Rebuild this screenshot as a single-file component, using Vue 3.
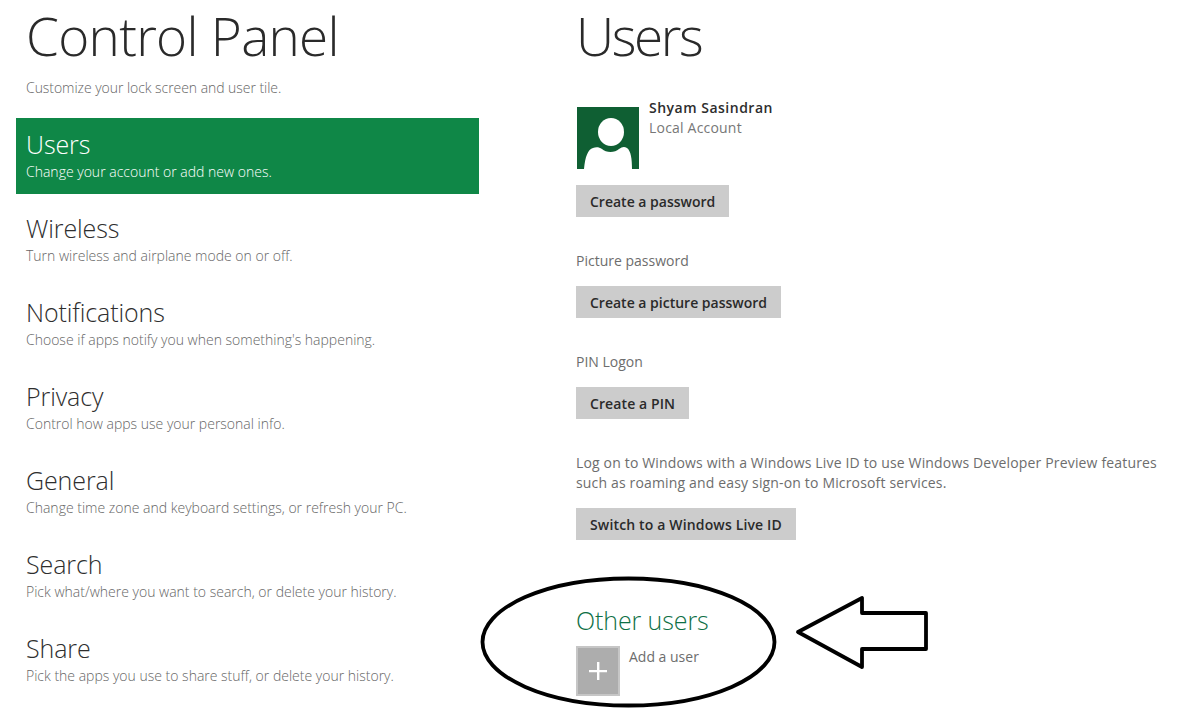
<script setup>
const items = [
  { t: 'Users', s: 'Change your account or add new ones.', active: true },
  { t: 'Wireless', s: 'Turn wireless and airplane mode on or off.' },
  { t: 'Notifications', s: "Choose if apps notify you when something's happening." },
  { t: 'Privacy', s: 'Control how apps use your personal info.' },
  { t: 'General', s: 'Change time zone and keyboard settings, or refresh your PC.' },
  { t: 'Search', s: 'Pick what/where you want to search, or delete your history.' },
  { t: 'Share', s: 'Pick the apps you use to share stuff, or delete your history.' }
]
</script>

<template>
  <div class="page">
    <aside class="left">
      <h1 class="title">Control Panel</h1>
      <p class="intro">Customize your lock screen and user tile.</p>
      <ul class="nav">
        <li v-for="i in items" :key="i.t" class="item" :class="{ active: i.active }">
          <div class="item-t">{{ i.t }}</div>
          <div class="item-s">{{ i.s }}</div>
        </li>
      </ul>
    </aside>
    <main class="right">
      <h1 class="title users">Users</h1>
      <div class="profile">
        <svg class="avatar" width="62" height="62" viewBox="0 0 62 62">
          <rect width="62" height="62" fill="#0f5f33" />
          <ellipse cx="34" cy="25" rx="13" ry="14" fill="#fff" />
          <path d="M7 62C8 50 11 42 16 41C19 40 22 40 25 42C29 46 38 46 42 42C45 40 47 39 50 41C54 44 55 52 55 62Z" fill="#fff" />
        </svg>
        <div class="who">
          <div class="name">Shyam Sasindran</div>
          <div class="acct">Local Account</div>
        </div>
      </div>
      <button class="btn first">Create a password</button>
      <p class="label">Picture password</p>
      <button class="btn">Create a picture password</button>
      <p class="label">PIN Logon</p>
      <button class="btn pin">Create a PIN</button>
      <p class="label para">Log on to Windows with a Windows Live ID to use Windows Developer Preview features<br />such as roaming and easy sign-on to Microsoft services.</p>
      <button class="btn live">Switch to a Windows Live ID</button>
      <h2 class="other">Other users</h2>
      <div class="add">
        <div class="tile">
          <svg width="18" height="18" viewBox="0 0 18 18"><path d="M8 0h2.4v8H18v2.2h-7.6V18H8v-7.8H0V8h8z" fill="#fff" /></svg>
        </div>
        <span class="add-l">Add a user</span>
      </div>
    </main>
    <svg class="mark" width="1189" height="718" viewBox="0 0 1189 718" fill="none" stroke="#000">
      <ellipse cx="628.5" cy="642" rx="146" ry="63.5" stroke-width="3.8" />
      <path d="M798 632L862 598V613H926V649H862V667Z" stroke-width="3.8" stroke-linejoin="round" />
    </svg>
  </div>
</template>

<style>
html, body { margin: 0; background: #fff; }
</style>

<style scoped>
.page {
  position: relative;
  width: 1189px;
  height: 718px;
  overflow: hidden;
  display: flex;
  font-family: "Open Sans", "Noto Sans", sans-serif;
  color: #6d6d6d;
  background: #fff;
}
.left { width: 463px; margin-left: 16px; flex: none; }
.right { margin-left: 97px; flex: 1; display: flex; flex-direction: column; align-items: flex-start; }
.title {
  margin: 0;
  font-size: 53px;
  line-height: 72px;
  font-weight: 300;
  color: #2a2a2a;
  letter-spacing: -0.7px;
}
.title.users { letter-spacing: -2.4px; }
.left .title { padding-left: 10px; }
.intro {
  margin: 6px 0 0;
  padding-left: 10px;
  font-size: 14px;
  line-height: 20px;
  font-weight: 300;
  color: #666;
  letter-spacing: -0.05px;
}
.nav { list-style: none; margin: 20px 0 0; padding: 0; }
.item { height: 76px; margin-bottom: 8px; padding: 11px 10px 0; box-sizing: border-box; }
.item.active { background: #0f8747; }
.item-t {
  font-size: 25px;
  line-height: 30px;
  font-weight: 300;
  color: #2e2e2e;
  letter-spacing: -0.1px;
}
.item-s {
  margin-top: 3px;
  font-size: 14px;
  line-height: 20px;
  font-weight: 300;
  color: #666;
  letter-spacing: 0;
}
.active .item-t, .active .item-s { color: #fff; }
.profile { display: flex; margin-top: 35px; height: 62px; padding-left: 1px; }
.who { margin-left: 10px; margin-top: -9px; }
.name { font-size: 14px; line-height: 20px; font-weight: 600; color: #2d2d2d; letter-spacing: 0.5px; }
.acct { font-size: 14px; line-height: 20px; color: #777; letter-spacing: 0.2px; }
.btn {
  display: block;
  border: 0;
  margin: 0;
  height: 32px;
  padding: 0 14px;
  background: #cccccc;
  font: 600 14px "Open Sans", "Noto Sans", sans-serif;
  color: #2a2a2a;
}
.btn.first { margin-top: 16px; }
.btn.pin { letter-spacing: 0.1px; }
.btn.live { letter-spacing: 0.15px; }
.label { margin: 34px 0 15px; font-size: 14px; line-height: 20px; color: #6d6d6d; }
.para { letter-spacing: 0.16px; }
.other {
  margin: 63px 0 0;
  font-size: 25px;
  line-height: 34px;
  font-weight: 300;
  color: #0e7046;
  letter-spacing: -0.1px;
}
.add { display: flex; margin-top: 9px; }
.tile {
  width: 44px;
  height: 50px;
  box-sizing: border-box;
  border: 2px solid #c6c6c6;
  background: #adadad;
  display: flex;
  align-items: center;
  justify-content: center;
}
.add-l { margin-left: 9px; margin-top: 1px; font-size: 14px; line-height: 20px; color: #6d6d6d; }
.mark { position: absolute; left: 0; top: 0; pointer-events: none; }
</style>
